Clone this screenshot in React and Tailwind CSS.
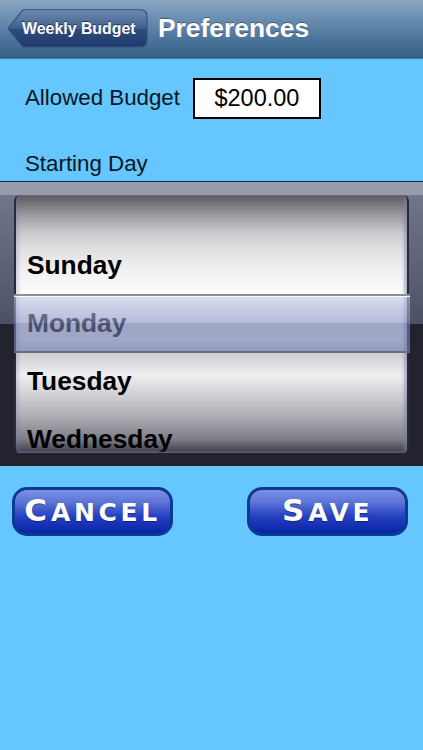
import React from 'react'

const days = ['Sunday', 'Monday', 'Tuesday', 'Wednesday']

const BackShape = () => (
  <svg className="absolute inset-0" width="141" height="39" viewBox="0 0 141 39" fill="none">
    <defs>
      <linearGradient id="back" x1="0" y1="0" x2="0" y2="1">
        <stop offset="0" stopColor="#6f8bb0" />
        <stop offset="0.5" stopColor="#3f5f8e" />
        <stop offset="0.52" stopColor="#2f4c7f" />
        <stop offset="1" stopColor="#1f3a6e" />
      </linearGradient>
    </defs>
    <path
      d="M16 0.75H134a6 6 0 0 1 6 6V32a6 6 0 0 1-6 6H16L0.9 19.5Z"
      fill="url(#back)"
      stroke="#34537c"
      strokeWidth="1.2"
    />
  </svg>
)

const GlossButton = ({ first, rest }) => (
  <button className="w-[161px] h-[49px] rounded-[15px] border-[3px] border-[#0b3a93] bg-[linear-gradient(180deg,#7d92e2_0%,#5a72d6_30%,#2440c0_62%,#0a22a8_100%)] text-white font-bold leading-none [font-family:'DejaVu_Sans',sans-serif] flex items-baseline justify-center pt-[5px] [text-shadow:0_1px_1px_rgba(0,0,40,0.4)]">
    <span className="text-[31px] tracking-[4px]">{first}</span>
    <span className="text-[25px] uppercase tracking-[3.6px]">{rest}</span>
  </button>
)

export default function App() {
  return (
    <div className="relative w-full h-[750px] overflow-hidden bg-[#66c6ff] [font-family:'Liberation_Sans',Arial,sans-serif]">
      {/* Nav bar */}
      <header className="h-[58px] flex items-center pl-[7px] gap-[10px] bg-[linear-gradient(180deg,#8ba7c4_0%,#6d90b3_30%,#4b7399_70%,#386288_100%)] border-b border-[#2f5678] shadow-[0_1px_1px_rgba(30,70,110,0.5)]">
        <button className="relative w-[141px] h-[39px] shrink-0 flex items-center pl-[15px] text-white font-bold text-[15.9px] [text-shadow:0_-1px_0_rgba(0,0,0,0.5)]">
          <BackShape />
          <span className="relative whitespace-nowrap">Weekly Budget</span>
        </button>
        <h1 className="text-white font-bold text-[26.4px] leading-none [text-shadow:0_-1px_0_rgba(0,0,0,0.35)]">
          Preferences
        </h1>
      </header>

      {/* Form */}
      <div className="h-[123px] pt-[20px] pl-[25px] text-[#0b1622]">
        <div className="flex items-center gap-[13px] h-[41px]">
          <span className="text-[22.3px] leading-none whitespace-nowrap">Allowed Budget</span>
          <div className="w-[128px] h-[41px] bg-white border-2 border-black flex items-center justify-center text-[23.5px] text-black">
            $200.00
          </div>
        </div>
        <p className="mt-[32px] text-[22.3px] leading-[26px]">Starting Day</p>
      </div>

      {/* Picker */}
      <section className="h-[285px] border-t border-[#10283c]">
        <div className="h-[13px] bg-[#989baa]" />
        <div className="h-[271px] px-[14px] bg-[linear-gradient(180deg,#70768b_0%,#4d5165_47.5%,#22232e_47.6%,#22232e_100%)]">
          <div className="relative w-[395px] h-[258px] overflow-hidden rounded-t-[6px] rounded-b-[5px] border-x-2 border-x-[#2a2a34] border-b border-b-[#5c5c70] pt-[41px] bg-[linear-gradient(180deg,#59585d_0%,#9c9ca0_8%,#cbcccf_15%,#dfe0e2_21%,#f0f0f1_29%,#fcfcfc_38%,#fcfcfc_56%,#cfcfd2_62%,#efeff1_70%,#c8c8cc_80%,#a9a9af_87%,#7d7e88_95%,#3e3e4a_100%)]">
            {days.map((day) => (
              <div
                key={day}
                className="h-[58px] flex items-center pl-[11px] text-[26.3px] font-bold leading-none text-black"
              >
                {day}
              </div>
            ))}
            {/* Edge shading of the wheel */}
            <div className="absolute inset-0 shadow-[inset_-3px_0_3px_rgba(120,125,170,0.55),inset_3px_0_3px_rgba(120,125,170,0.25)]" />
          </div>
        </div>
      </section>

      {/* Selection bar lying over the wheel */}
      <div className="absolute left-[14px] top-[294px] w-[396px] h-[59px] border-t-2 border-t-[#8b9094] border-b-2 border-b-[#6a6d80] shadow-[inset_0_1px_0_rgba(255,255,255,0.9)] bg-[linear-gradient(180deg,rgba(199,204,232,0.6)_0%,rgba(142,152,196,0.65)_49%,rgba(111,121,170,0.65)_49.5%,rgba(111,121,170,0.65)_100%)]" />

      {/* Actions */}
      <div className="flex justify-between pl-[12px] pr-[15px] mt-[21px]">
        <GlossButton first="C" rest="ancel" />
        <GlossButton first="S" rest="ave" />
      </div>
    </div>
  )
}
